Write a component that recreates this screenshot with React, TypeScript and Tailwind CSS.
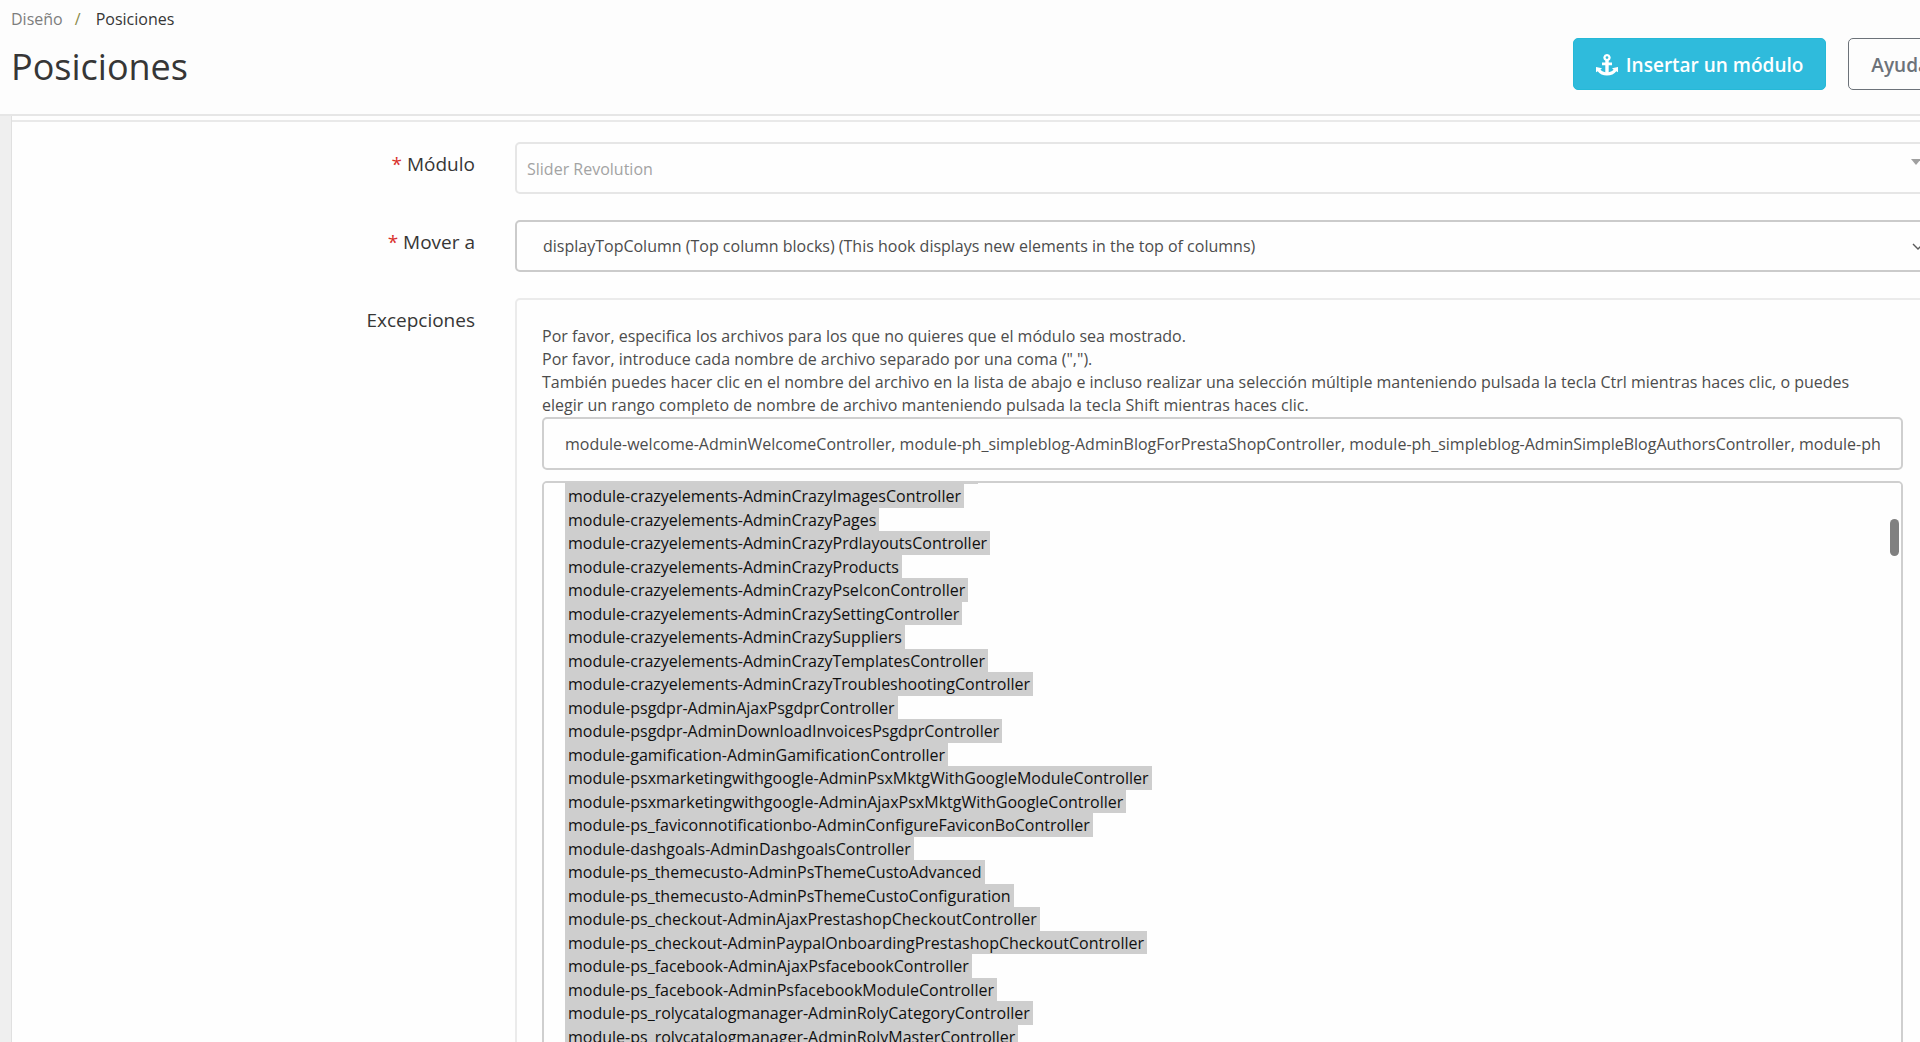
import { useEffect, useRef, useState } from "react";

const controllers = [
  "module-crazyelements-AdminCrazyContentsController",
  "module-crazyelements-AdminCrazyImagesController",
  "module-crazyelements-AdminCrazyPages",
  "module-crazyelements-AdminCrazyPrdlayoutsController",
  "module-crazyelements-AdminCrazyProducts",
  "module-crazyelements-AdminCrazyPseIconController",
  "module-crazyelements-AdminCrazySettingController",
  "module-crazyelements-AdminCrazySuppliers",
  "module-crazyelements-AdminCrazyTemplatesController",
  "module-crazyelements-AdminCrazyTroubleshootingController",
  "module-psgdpr-AdminAjaxPsgdprController",
  "module-psgdpr-AdminDownloadInvoicesPsgdprController",
  "module-gamification-AdminGamificationController",
  "module-psxmarketingwithgoogle-AdminPsxMktgWithGoogleModuleController",
  "module-psxmarketingwithgoogle-AdminAjaxPsxMktgWithGoogleController",
  "module-ps_faviconnotificationbo-AdminConfigureFaviconBoController",
  "module-dashgoals-AdminDashgoalsController",
  "module-ps_themecusto-AdminPsThemeCustoAdvanced",
  "module-ps_themecusto-AdminPsThemeCustoConfiguration",
  "module-ps_checkout-AdminAjaxPrestashopCheckoutController",
  "module-ps_checkout-AdminPaypalOnboardingPrestashopCheckoutController",
  "module-ps_facebook-AdminAjaxPsfacebookController",
  "module-ps_facebook-AdminPsfacebookModuleController",
  "module-ps_rolycatalogmanager-AdminRolyCategoryController",
  "module-ps_rolycatalogmanager-AdminRolyMasterController",
  "module-ps_rolycatalogmanager-AdminRolyProductController",
  "module-ps_rolycatalogmanager-AdminRolyStockController",
];

function AnchorIcon() {
  return (
    <svg viewBox="0 0 22 22" className="size-[22px] fill-current" aria-hidden="true">
      <path
        fillRule="evenodd"
        d="M11 0a3.6 3.6 0 0 1 1.7 6.8V8.4H16v2.8h-3.3v7c2.2-.3 3.9-1.2 4.9-2.4L16 14.3l6-1.2v5.2l-1.7-1.1C18.500 19.900 15 21.600 11 21.600S3.500 19.900 1.700 17.200L0 18.300v-5.200l6 1.200-1.600 1.500c1 1.200 2.700 2.100 4.900 2.400v-7H6V8.400h3.300V6.800A3.600 3.600 0 0 1 11 0zm0 2.200a1.400 1.400 0 1 0 0 2.800 1.400 1.400 0 0 0 0-2.800z"
      />
    </svg>
  );
}

function Header() {
  return (
    <header className="flex h-[116px] items-start justify-between border-b-2 border-[#e6e6e6] bg-[#fdfdfd] pl-[11px]">
      <div>
        <nav className="flex pt-2 text-[16px] leading-[22px]">
          <a href="#diseno" className="text-[#7d7d7d]">
            Diseño
          </a>
          <span className="w-[33px] pl-3 text-[#8a8a4a]">/</span>
          <a href="#posiciones" className="text-[#363636]">
            Posiciones
          </a>
        </nav>
        <h1 className="mt-3 text-[36px] leading-[50px] text-[#363636]">Posiciones</h1>
      </div>
      <div className="flex gap-[22px] pt-[38px] text-[19px] font-semibold">
        <button className="flex h-[52px] items-center gap-2 rounded-[5px] border border-[#25b9d7] bg-[#2fbbdc] px-[22px] pt-[2px] text-white">
          <AnchorIcon />
          Insertar un módulo
        </button>
        <button className="h-[52px] rounded-[5px] border border-[#6c7279] px-[22px] pt-[2px] text-[#6c7279]">
          Ayuda
        </button>
      </div>
    </header>
  );
}

function Label({ htmlFor, text, required }: { htmlFor: string; text: string; required?: boolean }) {
  return (
    <label
      htmlFor={htmlFor}
      className="w-[463px] shrink-0 pt-2 text-right text-[19px] leading-[28px] text-[#363636]"
    >
      {required && <span className="text-[#d9302c]">* </span>}
      {text}
    </label>
  );
}

function Exceptions() {
  const listRef = useRef<HTMLSelectElement>(null);
  const [files, setFiles] = useState(
    "module-welcome-AdminWelcomeController, module-ph_simpleblog-AdminBlogForPrestaShopController, module-ph_simpleblog-AdminSimpleBlogAuthorsController, module-ph_simpleblog-AdminSimpleBlogCategoriesController"
  );

  useEffect(() => {
    if (listRef.current) listRef.current.scrollTop = 22;
  }, []);

  return (
    <div className="min-w-0 flex-1 rounded-[5px] border-2 border-[#ebebeb] px-[25px] py-[25px]">
      <p className="text-[16px] leading-[23px] text-[#4c4c4c]">
        Por favor, especifica los archivos para los que no quieres que el módulo sea mostrado.
        <br />
        Por favor, introduce cada nombre de archivo separado por una coma (",").
        <br />
        También puedes hacer clic en el nombre del archivo en la lista de abajo e incluso realizar una
        selección múltiple manteniendo pulsada la tecla Ctrl mientras haces clic, o puedes
        <br />
        elegir un rango completo de nombre de archivo manteniendo pulsada la tecla Shift mientras haces
        clic.
      </p>
      <input
        id="excepciones"
        type="text"
        value={files}
        onChange={(e) => setFiles(e.target.value)}
        className="block h-[53px] w-full rounded-[5px] border-2 border-[#cfcfcf] bg-[#fefefe] px-[21px] text-[16px] text-[#4c4c4c]"
      />
      <div className="relative mt-[11px]">
        <select
          ref={listRef}
          multiple
          aria-label="Lista de archivos"
          defaultValue={controllers}
          className="block h-[600px] w-full overflow-y-scroll rounded-[5px] border-2 border-[#cfcfcf] bg-[#fefefe] px-[21px] text-[16px] [scrollbar-width:none]"
        >
          {controllers.map((name) => (
            <option
              key={name}
              value={name}
              className="w-fit px-[3px] pt-px pb-0 text-[#101010] even:pb-px"
            >
              {name}
            </option>
          ))}
        </select>
        <div className="absolute top-[38px] right-1 h-[37px] w-[9px] rounded-full bg-[#808080]" />
      </div>
    </div>
  );
}

export default function App() {
  return (
    <div className="h-screen overflow-hidden bg-[#efefef] font-['Open_Sans',sans-serif]">
      <div className="-mr-8">
        <Header />
        <main className="pl-[11px]">
          <div className="border-l border-[#e0e0e0] bg-[#fefefe] pt-1">
            <form className="flex flex-col gap-[26px] border-t-2 border-[#e9e9e9] pt-5 pr-[22px]">
              <div className="flex gap-10">
                <Label htmlFor="modulo" text="Módulo" required />
                <div className="relative min-w-0 flex-1">
                  <select
                    id="modulo"
                    disabled
                    className="h-[52px] w-full appearance-none rounded-[5px] border-2 border-[#e6e6e6] px-[10px] pt-[2px] text-[16px] text-[#a3a3a3] opacity-100"
                  >
                    <option>Slider Revolution</option>
                  </select>
                  <svg
                    viewBox="0 0 10 6"
                    className="pointer-events-none absolute top-[17px] right-[9px] h-[6px] w-[10px] fill-[#a0a0a0]"
                  >
                    <path d="M0 0h10L5 6z" />
                  </svg>
                </div>
              </div>
              <div className="flex gap-10">
                <Label htmlFor="mover" text="Mover a" required />
                <div className="relative min-w-0 flex-1">
                  <select
                    id="mover"
                    className="h-[52px] w-full appearance-none rounded-[5px] border-2 border-[#cbcbcb] px-[26px] text-[16px] text-[#4c4c4c]"
                  >
                    <option>
                      displayTopColumn (Top column blocks) (This hook displays new elements in the top of
                      columns)
                    </option>
                  </select>
                  <svg
                    viewBox="0 0 12 7"
                    className="pointer-events-none absolute top-[23px] right-[6px] h-[7px] w-[12px] fill-none stroke-[#5a5a5a]"
                  >
                    <path d="M1 1l5 5 5-5" strokeWidth="1.4" />
                  </svg>
                </div>
              </div>
              <div className="flex gap-10">
                <Label htmlFor="excepciones" text="Excepciones" />
                <Exceptions />
              </div>
            </form>
          </div>
        </main>
      </div>
    </div>
  );
}
